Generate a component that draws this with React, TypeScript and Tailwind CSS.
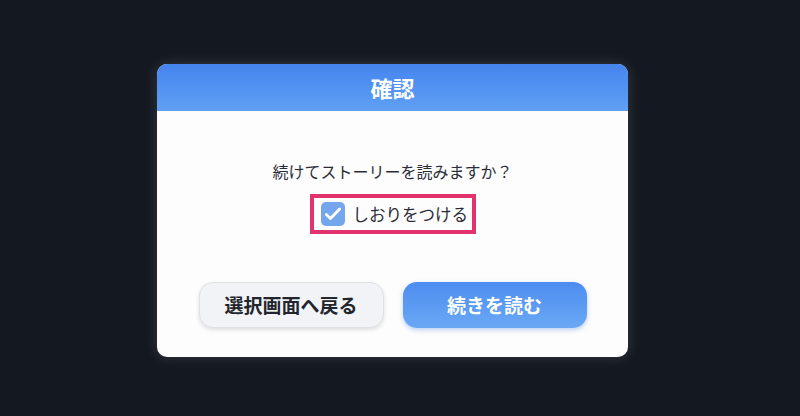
export default function App() {
  return (
    <div
      className="flex h-[416px] w-[800px] justify-center bg-[#141820] pt-[64px] pr-[15px]"
      style={{ fontFamily: '"Noto Sans CJK JP", "Noto Sans", sans-serif' }}
    >
      <div className="flex h-[293px] w-[471px] flex-col overflow-hidden rounded-[10px] bg-[#fefdfe] shadow-[0_0_14px_rgba(200,210,230,0.18)]">
        <div className="flex h-[47px] items-center justify-center bg-gradient-to-b from-[#4684ee] to-[#5fa0f4]">
          <h2 className="text-[22px] font-bold text-white">確認</h2>
        </div>
        <div className="flex flex-1 flex-col items-center pt-[49px]">
          <p className="text-[16px] leading-[22px] text-[#2a2d36]">続けてストーリーを読みますか？</p>
          <label className="mt-[12px] flex h-[40px] w-[166px] items-center gap-[8px] border-[4px] border-[#e2336c] pl-[7px]">
            <span className="flex h-[24px] w-[24px] items-center justify-center rounded-[5px] bg-[#74a6ee]">
              <svg width="20" height="20" viewBox="0 0 24 24" fill="none" stroke="white" strokeWidth="3.4" strokeLinecap="round" strokeLinejoin="round">
                <path d="M4 12.5l5 5L20 6" />
              </svg>
            </span>
            <span className="text-[16.5px] text-[#2a2d36]">しおりをつける</span>
          </label>
          <div className="mt-[48px] flex gap-[19px]">
            <button className="h-[46px] w-[185px] rounded-[14px] border border-[#dfe1e6] bg-[#f2f3f6] text-[19px] font-bold text-[#22252d] shadow-[0_2px_4px_rgba(0,0,0,0.12)]">
              選択画面へ戻る
            </button>
            <button className="h-[46px] w-[184px] rounded-[14px] bg-gradient-to-b from-[#4d8cef] to-[#6aa8f5] text-[19px] font-bold text-white shadow-[0_2px_5px_rgba(60,120,220,0.35)]">
              続きを読む
            </button>
          </div>
        </div>
      </div>
    </div>
  )
}
